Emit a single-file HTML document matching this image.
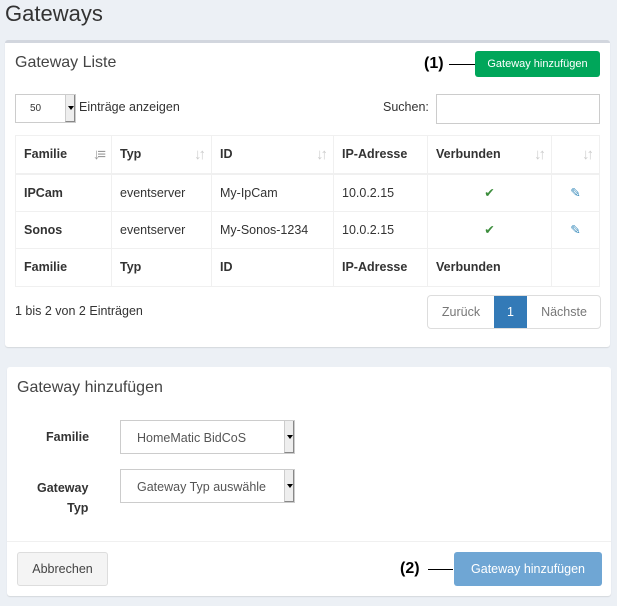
<!DOCTYPE html>
<html><head><meta charset="utf-8"><style>
*{box-sizing:border-box;margin:0;padding:0}
body{width:617px;height:606px;background:#ecf0f5;font-family:"Liberation Sans",sans-serif;font-size:13px;color:#333;position:relative;overflow:hidden}
.a{position:absolute;white-space:nowrap}
.box{position:absolute;background:#fff;border-radius:3px;box-shadow:0 1px 1px rgba(0,0,0,.1)}
table{border-collapse:collapse;position:absolute;left:15px;top:135px;width:585px}
td,th{border:1px solid #f0f0f0;height:37px;padding:0 8px;text-align:left;font-size:12.5px}
tbody td,tbody th{height:37.5px}
th{font-weight:bold;position:relative}
thead th{border-bottom:2px solid #f0f0f0;height:38px}
.s{position:absolute;right:8px;top:10px;color:#ccc;font-size:15px;letter-spacing:-3px;font-weight:bold}
.sel{position:absolute;background:#fff;border:1px solid #ccc}
.sel .ar{position:absolute;right:0;top:0;bottom:0;width:10px;background:#eee;border-left:1px solid #ccc;border-right:1px solid #888;border-bottom:1px solid #888}
.sel .ar:after{content:"";position:absolute;left:2px;top:50%;margin-top:-2px;border:3px solid transparent;border-top:4px solid #000}
</style></head><body>
<div class="a" style="left:5px;top:1px;font-size:22px;color:#333">Gateways</div>

<div class="box" style="left:5px;top:40px;width:605px;height:307px;border-top:3px solid #d2d6de"></div>
<div class="a" style="left:15px;top:54px;font-size:16px;color:#444">Gateway Liste</div>
<div class="a" style="left:424px;top:55px;font-size:16px;font-weight:bold;color:#000">(1)</div>
<div class="a" style="left:449px;top:64px;width:26px;height:1px;background:#000"></div>
<div class="a" style="left:475px;top:51px;width:125px;height:26px;background:#00a65a;border-radius:3px;color:#fff;font-size:11px;text-align:center;line-height:26px">Gateway hinzufügen</div>

<div class="sel" style="left:15px;top:94px;width:61px;height:29px"><span class="a" style="left:14px;top:8px;font-size:10px">50</span><div class="ar"></div></div>
<div class="a" style="left:79px;top:100px;font-size:12.5px">Einträge anzeigen</div>
<div class="a" style="left:383px;top:100px;font-size:12.5px">Suchen:</div>
<div class="a" style="left:436px;top:94px;width:164px;height:30px;border:1px solid #ccc"></div>

<table>
<thead><tr><th style="width:96px">Familie<span class="s" style="color:#999">↓≡</span></th><th style="width:100px">Typ<span class="s">↓↑</span></th><th style="width:122px">ID<span class="s">↓↑</span></th><th style="width:94px">IP-Adresse</th><th style="width:124px">Verbunden<span class="s">↓↑</span></th><th><span class="s">↓↑</span></th></tr></thead>
<tbody>
<tr><th>IPCam</th><td>eventserver</td><td>My-IpCam</td><td>10.0.2.15</td><td style="text-align:center;color:#3c8d3c">✔</td><td style="text-align:center;color:#3c8dbc">✎</td></tr>
<tr><th>Sonos</th><td>eventserver</td><td>My-Sonos-1234</td><td>10.0.2.15</td><td style="text-align:center;color:#3c8d3c">✔</td><td style="text-align:center;color:#3c8dbc">✎</td></tr>
<tr><th>Familie</th><th>Typ</th><th>ID</th><th>IP-Adresse</th><th>Verbunden</th><th></th></tr>
</tbody></table>

<div class="a" style="left:15px;top:304px;font-size:12.5px">1 bis 2 von 2 Einträgen</div>
<div class="a" style="left:427px;top:295px;width:174px;height:34px;border:1px solid #ddd;border-radius:4px;overflow:hidden;font-size:12.5px;line-height:32px">
<span class="a" style="left:0;width:66px;text-align:center;color:#777">Zurück</span>
<span class="a" style="left:66px;width:33px;height:34px;text-align:center;background:#337ab7;color:#fff">1</span>
<span class="a" style="left:99px;width:74px;text-align:center;color:#777">Nächste</span>
</div>

<div class="box" style="left:7px;top:367px;width:604px;height:229px"></div>
<div class="a" style="left:17px;top:379px;font-size:16px;color:#444">Gateway hinzufügen</div>
<div class="a" style="left:46px;top:430px;font-weight:bold;font-size:12.5px">Familie</div>
<div class="sel" style="left:120px;top:420px;width:175px;height:34px"><span class="a" style="left:16px;top:10px;font-size:12.5px;color:#555">HomeMatic BidCoS</span><div class="ar"></div></div>
<div class="a" style="left:37px;top:478px;font-weight:bold;font-size:12.5px;text-align:right;line-height:20px">Gateway<br><span style="padding-left:29px">Typ</span></div>
<div class="sel" style="left:120px;top:469px;width:175px;height:34px;overflow:hidden"><span class="a" style="left:16px;top:10px;font-size:12.5px;color:#555">Gateway Typ auswähle</span><div class="ar" style="background:#eee;z-index:1"></div></div>
<div class="a" style="left:7px;top:541px;width:604px;height:1px;background:#f0f0f0"></div>
<div class="a" style="left:17px;top:552px;width:91px;height:34px;border:1px solid #ddd;background:#f4f4f4;border-radius:3px;text-align:center;line-height:32px;font-size:12.5px;color:#444">Abbrechen</div>
<div class="a" style="left:400px;top:560px;font-size:16px;font-weight:bold;color:#000">(2)</div>
<div class="a" style="left:428px;top:569px;width:25px;height:1px;background:#000"></div>
<div class="a" style="left:454px;top:552px;width:148px;height:34px;background:#6fa6d4;border-radius:3px;text-align:center;line-height:34px;font-size:12.5px;color:#fff">Gateway hinzufügen</div>
</body></html>
